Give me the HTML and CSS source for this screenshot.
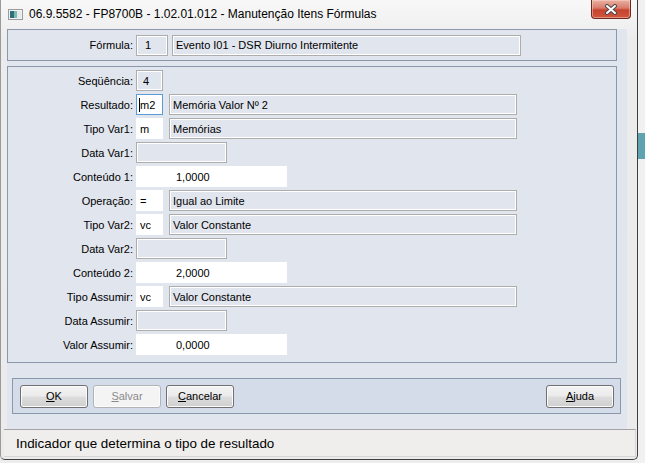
FILE: index.html
```html
<!DOCTYPE html>
<html>
<head>
  <meta charset="UTF-8" />
  <title>Manutenção Itens Fórmulas</title>
  <link rel="stylesheet" href="styles.css">
</head>
<body>
  <div class="desk">
    <div class="window">
      <div class="titlebar">
        <svg class="app-icon" width="15" height="11" viewBox="0 0 15 11">
          <rect x="0.5" y="0.5" width="14" height="10" fill="#f3f3f3" stroke="#9a9a9a" />
          <rect x="2" y="2" width="4" height="7" fill="#2d6f78" />
          <rect x="6" y="2" width="3" height="7" fill="#7fb9ae" />
          <rect x="9" y="2" width="4" height="7" fill="#e6e9ea" />
        </svg>
        <span class="title">06.9.5582 - FP8700B - 1.02.01.012 - Manutenção Itens Fórmulas</span>
        <div class="close">
          <svg width="14" height="11" viewBox="0 0 14 11">
            <path d="M3 2 L11 9 M11 2 L3 9" stroke="#4a4a4a" stroke-width="4" stroke-linecap="round" />
            <path d="M3 2 L11 9 M11 2 L3 9" stroke="#ffffff" stroke-width="2" stroke-linecap="round" />
          </svg>
        </div>
      </div>

      <div class="client">
        <div class="panel formula">
          <span class="lbl">Fórmula:</span>
          <div class="field ro f-code">1</div>
          <div class="field ro f-desc">Evento I01 - DSR Diurno Intermitente</div>
        </div>

        <div class="panel fields">
          <div class="row">
            <span class="lbl">Seqüência:</span>
            <div class="field ro code seq">4</div>
          </div>
          <div class="row">
            <span class="lbl">Resultado:</span>
            <div class="field code focus"><span class="caret"></span>m2</div>
            <div class="field ro desc">Memória Valor Nº 2</div>
          </div>
          <div class="row">
            <span class="lbl">Tipo Var1:</span>
            <div class="field code">m</div>
            <div class="field ro desc">Memórias</div>
          </div>
          <div class="row">
            <span class="lbl">Data Var1:</span>
            <div class="field ro date"></div>
          </div>
          <div class="row">
            <span class="lbl">Conteúdo 1:</span>
            <div class="field num">1,0000</div>
          </div>
          <div class="row">
            <span class="lbl">Operação:</span>
            <div class="field code">=</div>
            <div class="field ro desc">Igual ao Limite</div>
          </div>
          <div class="row">
            <span class="lbl">Tipo Var2:</span>
            <div class="field code">vc</div>
            <div class="field ro desc">Valor Constante</div>
          </div>
          <div class="row">
            <span class="lbl">Data Var2:</span>
            <div class="field ro date"></div>
          </div>
          <div class="row">
            <span class="lbl">Conteúdo 2:</span>
            <div class="field num">2,0000</div>
          </div>
          <div class="row">
            <span class="lbl">Tipo Assumir:</span>
            <div class="field code">vc</div>
            <div class="field ro desc">Valor Constante</div>
          </div>
          <div class="row">
            <span class="lbl">Data Assumir:</span>
            <div class="field ro date"></div>
          </div>
          <div class="row">
            <span class="lbl">Valor Assumir:</span>
            <div class="field num">0,0000</div>
          </div>
        </div>

        <div class="buttons">
          <div class="btn"><u>O</u>K</div>
          <div class="btn disabled"><u>S</u>alvar</div>
          <div class="btn"><u>C</u>ancelar</div>
          <div class="btn help"><u>A</u>juda</div>
        </div>
      </div>

      <div class="status">Indicador que determina o tipo de resultado</div>
    </div>
    <div class="edge">
      <div class="edge-teal"></div>
    </div>
  </div>
</body>
</html>
```

FILE: styles.css
```css
* {
  box-sizing: border-box;
}

body {
  margin: 0;
  font-family: "Liberation Sans", Arial, sans-serif;
  font-size: 11px;
  color: #000;
  background: #f2f2f2;
}

.desk {
  display: flex;
  width: 645px;
  height: 463px;
  overflow: hidden;
  background: #ededed;
}

.window {
  display: flex;
  flex-direction: column;
  width: 638px;
  height: 460px;
  background: linear-gradient(#f8f8f8, #ececec 40px, #ebebeb);
  border-left: 1px solid #9a9a9a;
  border-right: 1px solid #3f3f3f;
  border-bottom: 1px solid #3f3f3f;
  border-radius: 0 0 5px 5px;
}

.titlebar {
  display: flex;
  align-items: flex-start;
  height: 29px;
}

.app-icon {
  margin: 9px 0 0 7px;
}

.title {
  flex: 1;
  margin: 7px 0 0 6px;
  font-size: 12px;
  color: #000;
}

.close {
  display: flex;
  align-items: center;
  justify-content: center;
  width: 40px;
  height: 19px;
  margin-right: 6px;
  border: 1px solid #6b2a20;
  border-top: none;
  border-radius: 0 0 4px 4px;
  background: linear-gradient(#eab2a4 0%, #d97b69 45%, #c7442f 55%, #d0553c 100%);
  box-shadow: inset 0 0 0 1px rgba(255, 220, 210, 0.45);
}

.client {
  display: flex;
  flex-direction: column;
  width: 620px;
  height: 400px;
  margin-left: 6px;
  background: #e1e5ee;
}

.panel {
  width: 610px;
  border: 1px solid #8b97aa;
}

.formula {
  display: flex;
  align-items: center;
  height: 32px;
}

.fields {
  display: flex;
  flex-direction: column;
  gap: 3px;
  height: 297px;
  margin-top: 5px;
  padding-top: 3px;
}

.row {
  display: flex;
  align-items: center;
  height: 21px;
}

.lbl {
  width: 125px;
  margin-right: 3px;
  text-align: right;
  white-space: nowrap;
}

.field {
  display: flex;
  align-items: center;
  height: 21px;
  padding-left: 3px;
  background: #fff;
  border: 1px solid #fff;
  white-space: nowrap;
}

.field.ro {
  background: #e1e5ee;
  border: 1px solid #adadad;
  box-shadow: inset 0 0 0 1px #fff;
}

.f-code {
  width: 32px;
  padding-left: 8px;
}

.f-desc {
  width: 349px;
  margin-left: 4px;
}

.code {
  width: 27px;
}

.seq {
  padding-left: 6px;
}

.focus {
  border-color: #5b9bd6;
  padding-left: 2px;
}

.caret {
  display: inline-block;
  width: 1px;
  height: 14px;
  background: #000;
}

.desc {
  width: 348px;
  margin-left: 6px;
}

.date {
  width: 91px;
}

.num {
  width: 151px;
  padding-left: 39px;
}

.buttons {
  display: flex;
  align-items: center;
  gap: 5px;
  width: 609px;
  height: 36px;
  margin: 15px 0 0 5px;
  padding: 0 6px 0 7px;
  background: #d4dbe9;
  border: 1px solid #8b97aa;
}

.btn {
  display: flex;
  align-items: center;
  justify-content: center;
  width: 68px;
  height: 23px;
  border: 1px solid #707070;
  border-radius: 3px;
  background: linear-gradient(#f3f3f3 0%, #ebebeb 48%, #dddddd 52%, #cfcfcf 100%);
  box-shadow: inset 0 0 0 1px #fbfbfb;
}

.btn.disabled {
  color: #8a8a8a;
  border-color: #b0b4b7;
  background: #f4f4f4;
}

.btn.help {
  margin-left: auto;
}

.status {
  display: flex;
  align-items: center;
  height: 28px;
  margin: 0 1px 0 3px;
  padding-left: 12px;
  font-size: 13.4px;
  background: #f0eeec;
  border-top: 1px solid #a3a3a3;
  border-right: 1px solid #d6d6d6;
  border-bottom: 1px solid #d6d6d6;
}

.edge {
  flex: 1;
  height: 463px;
  padding-top: 133px;
  background: #f1f1f1;
}

.edge-teal {
  height: 26px;
  background: #5fa3b1;
}
```
